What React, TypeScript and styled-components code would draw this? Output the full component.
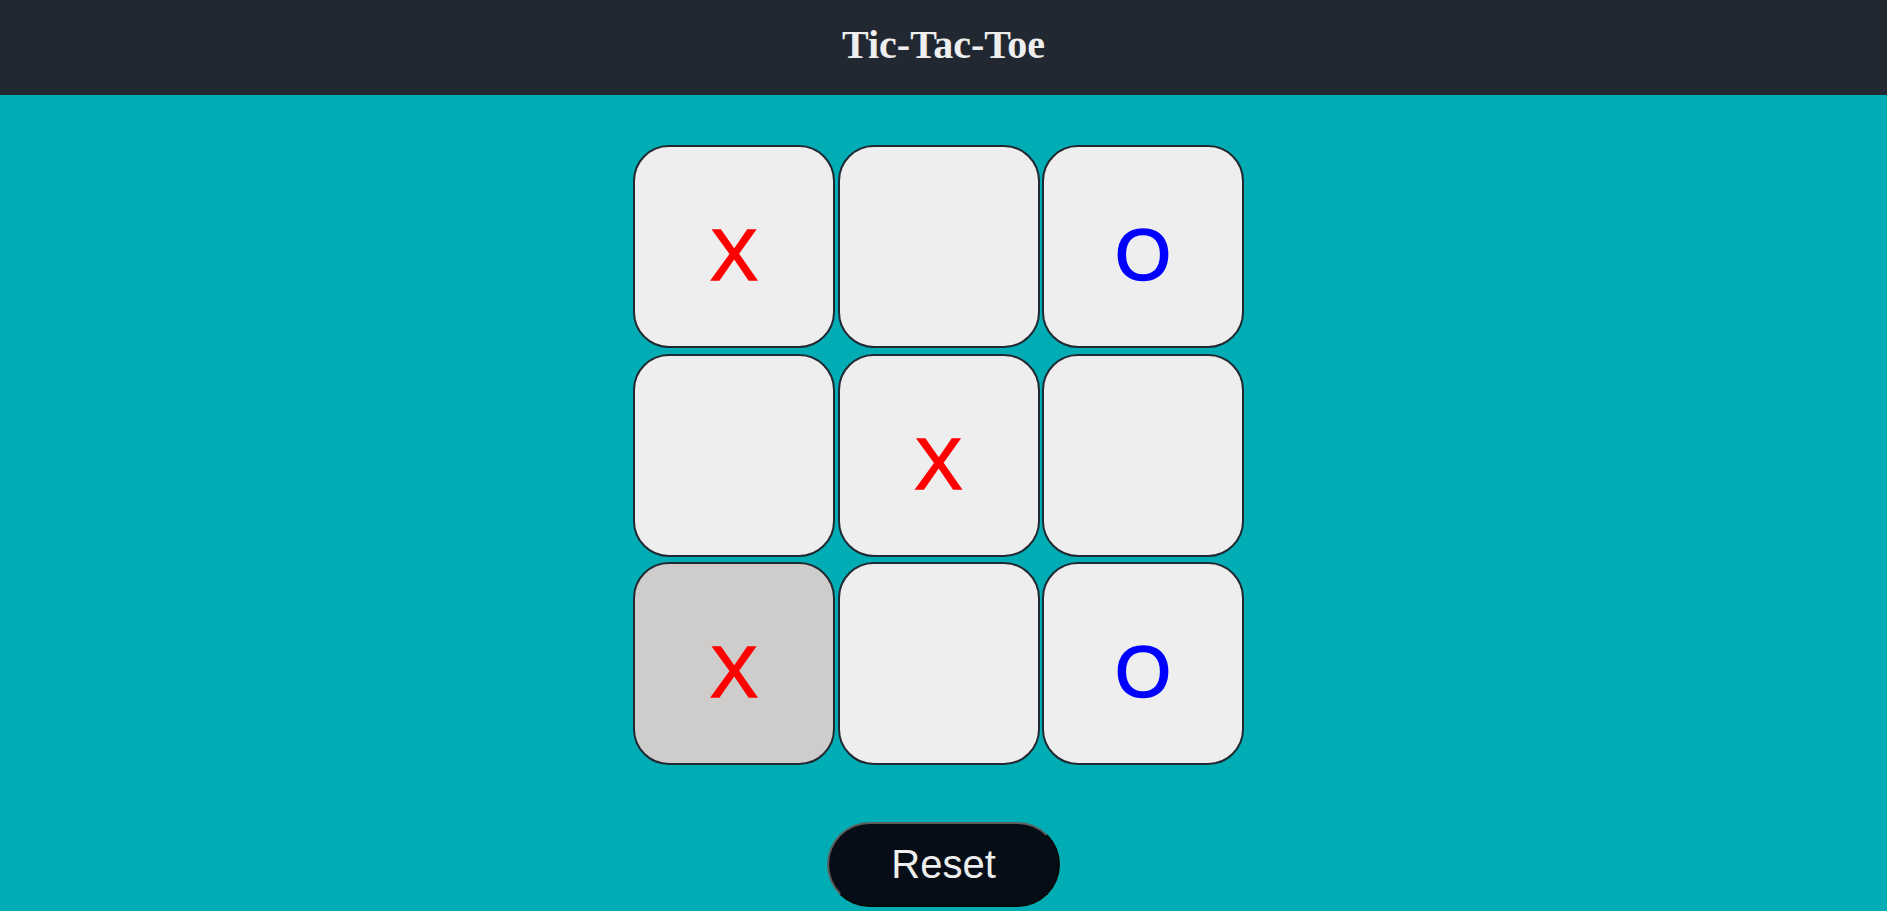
import React from "react";
import styled, { createGlobalStyle } from "styled-components";

const Global = createGlobalStyle`
  html, body { margin: 0; padding: 0; }
  body { background: #00adb5; font-family: "Liberation Sans", Arial, sans-serif; }
`;

const Page = styled.div`
  min-height: 911px;
  background: #00adb5;
  display: flex;
  flex-direction: column;
  align-items: center;
`;

const Header = styled.header`
  align-self: stretch;
  height: 95px;
  box-sizing: border-box;
  padding-bottom: 7px;
  background: #222831;
  display: flex;
  align-items: center;
  justify-content: center;
`;

const Title = styled.h1`
  margin: 0;
  font-family: "Liberation Serif", "Times New Roman", serif;
  font-weight: bold;
  font-size: 40px;
  color: #eeeeee;
`;

const Board = styled.div`
  margin-top: 50px;
  margin-right: 10px;
  display: grid;
  grid-template-columns: repeat(3, 202px);
  grid-auto-rows: 203px;
  column-gap: 2.5px;
  row-gap: 5.5px;
`;

const Cell = styled.button<{ $highlight?: boolean; $mark?: string }>`
  box-sizing: border-box;
  width: 202px;
  height: 203px;
  margin: 0;
  padding: 17px 0 0 0;
  border: 2px solid #222831;
  border-radius: 36px;
  background: ${(p) => (p.$highlight ? "#cecdcc" : "#eeeeee")};
  color: ${(p) => (p.$mark === "X" ? "#ff0000" : "#0000ff")};
  -webkit-text-stroke: 1.6px ${(p) => (p.$mark === "X" ? "#ff0000" : "#0000ff")};
  font-family: "Liberation Sans", Arial, sans-serif;
  font-weight: 400;
  font-size: 72px;
  display: flex;
  align-items: center;
  justify-content: center;
  cursor: pointer;
`;

const ResetButton = styled.button`
  margin-top: 57px;
  box-sizing: border-box;
  width: 233px;
  height: 85px;
  border: 2px outset #5e5e5e;
  border-radius: 43px;
  background: #070d17;
  color: #eeeeee;
  font-family: "Liberation Sans", Arial, sans-serif;
  font-size: 40px;
  padding: 0;
  cursor: pointer;
`;

const board = ["X", "", "O", "", "X", "", "X", "", "O"];

export default function App() {
  return (
    <>
      <Global />
      <Page>
        <Header>
          <Title>Tic-Tac-Toe</Title>
        </Header>
        <Board>
          {board.map((m, i) => (
            <Cell key={i} $mark={m} $highlight={i === 6}>
              {m}
            </Cell>
          ))}
        </Board>
        <ResetButton>Reset</ResetButton>
      </Page>
    </>
  );
}
